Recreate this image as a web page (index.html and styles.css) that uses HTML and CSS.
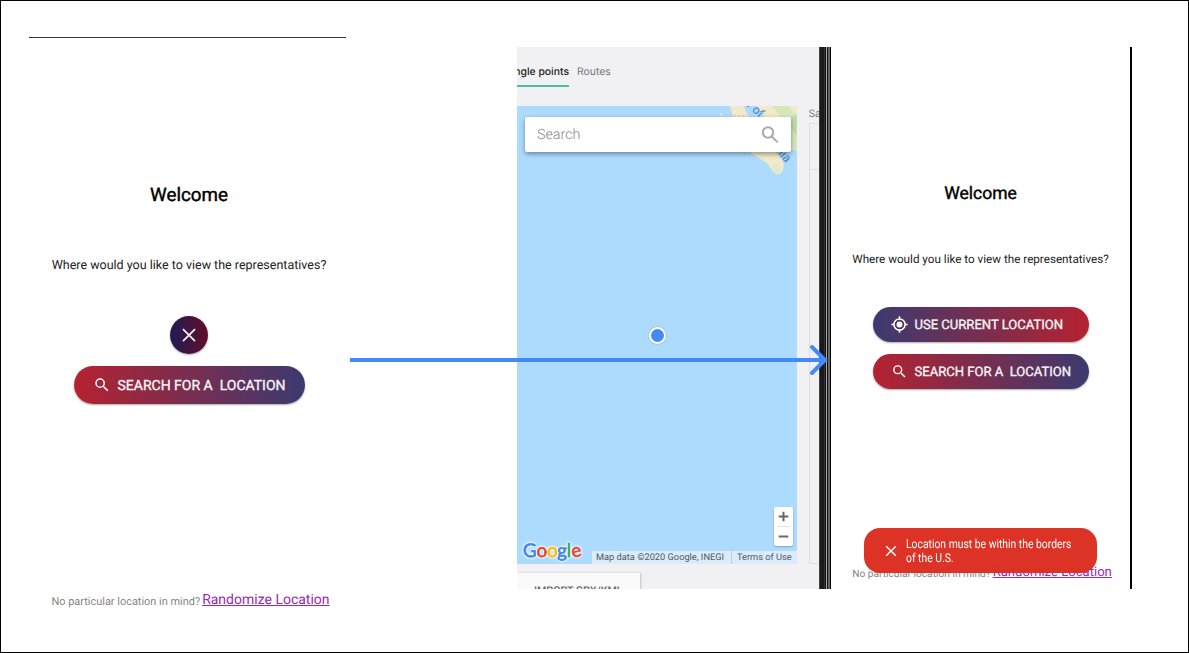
FILE: index.html
```html
<!DOCTYPE html>
<html lang="en">
<head>
<meta charset="utf-8">
<title>Welcome flow</title>
<link rel="stylesheet" href="styles.css">
</head>
<body>
<main class="board">
  <section class="screen start">
    <h1 class="title">Welcome</h1>
    <p class="question">Where would you like to view the representatives?</p>
    <button class="close"><svg width="38" height="38" viewBox="0 0 38 38"><path d="M13 13.2 25 25.2M25 13.2 13 25.2" stroke="#eee" stroke-width="1.8" fill="none"/></svg></button>
    <button class="pill pill-search">
      <svg class="pill-icon" viewBox="0 0 24 24"><path fill="#fff" d="M15.5 14h-.79l-.28-.27A6.47 6.47 0 0 0 16 9.5 6.5 6.5 0 1 0 9.5 16c1.61 0 3.09-.59 4.23-1.57l.27.28v.79l5 4.99L20.49 19zm-6 0a4.5 4.5 0 1 1 0-9 4.5 4.5 0 0 1 0 9z"/></svg>
      <span class="pill-label">SEARCH FOR A&nbsp; LOCATION</span>
    </button>
    <p class="footer"><span class="hint">No particular location in mind?</span> <a class="random">Randomize Location</a></p>
  </section>

  <section class="maps">
    <nav class="tabs"><span class="tab tab-active"><span class="tab-text">Single points</span></span><span class="tab">Routes</span></nav>
    <div class="content">
      <div class="map">
        <svg class="land" width="84" height="76" viewBox="0 0 84 76">
          <path fill="#f1e9c9" d="M17 0H31Q34 10 43 21L50 34Q57 42 64 47L69 54Q73 61 68 67Q63 71 59 64L54 57L38 47L24 27Q20 12 17 0Z"/>
          <path fill="#f1e9c9" d="M44 0H84V45Q74 43 69 34L60 24L51 10Z"/>
          <path fill="#d4e8ba" d="M59 0H76L84 12V45L74 40L78 25L67 10Z"/>
          <path fill="#bfdcaa" d="M76 12L84 8V30L78 22Z"/>
          <path fill="#dbebcb" d="M59 61Q64 54 68 61Q67 69 62 67Z"/>
          <path stroke="#d5c7a5" stroke-dasharray="2 2" d="M21 10H34"/>
          <circle cx="8.5" cy="8.5" r="1" fill="#eef2d8"/>
          <text class="sea" transform="translate(20 -12) rotate(42)">Gulf of</text>
          <text class="sea" text-anchor="end" transform="translate(73 57) rotate(48)">California</text>
        </svg>
        <div class="search"><span>Search</span><svg width="18" height="18" viewBox="0 0 18 18"><path fill="none" stroke="#aaa" stroke-width="2" d="M12.2 6.5a5.2 5.2 0 1 1-10.4 0 5.2 5.2 0 0 1 10.4 0zM10.5 10.2l6.2 6.2"/></svg></div>
        <span class="here"></span>
        <div class="zoomer"><span class="zoom-in"><svg width="19" height="19"><path d="M4.7 9.5h9.6M9.5 4.7v9.6" stroke="#666" stroke-width="2"/></svg></span><span class="zoom-out"><svg width="19" height="19"><path d="M4.7 9.5h9.6" stroke="#666" stroke-width="2"/></svg></span></div>
        <div class="credits">
          <span class="google"><b class="g-blue">G</b><b class="g-red">o</b><b class="g-yellow">o</b><b class="g-blue">g</b><b class="g-green">l</b><b class="g-red g-tilt">e</b></span>
          <span class="credit credit-data">Map data ©2020 Google, INEGI</span><span class="credit credit-terms">Terms of Use</span>
        </div>
      </div>
      <aside class="saved"><div class="saved-title">Saved</div><div class="saved-box"></div></aside>
    </div>
    <div class="import"><span>IMPORT GPX/KML</span></div>
    <div class="bezel"></div>
  </section>

  <section class="screen result">
    <h1 class="title">Welcome</h1>
    <p class="question">Where would you like to view the representatives?</p>
    <button class="pill pill-current">
      <svg class="pill-icon" viewBox="0 0 24 24"><circle cx="12" cy="12" r="7.9" fill="none" stroke="#fff" stroke-width="2.2"/><circle cx="12" cy="12" r="4.2" fill="#fff"/><path stroke="#fff" stroke-width="2.2" d="M12 .5v4M12 19.5v4M.5 12h4M19.5 12h4"/></svg>
      <span class="pill-label">USE CURRENT LOCATION</span>
    </button>
    <button class="pill pill-search">
      <svg class="pill-icon" viewBox="0 0 24 24"><path fill="#fff" d="M15.5 14h-.79l-.28-.27A6.47 6.47 0 0 0 16 9.5 6.5 6.5 0 1 0 9.5 16c1.61 0 3.09-.59 4.23-1.57l.27.28v.79l5 4.99L20.49 19zm-6 0a4.5 4.5 0 1 1 0-9 4.5 4.5 0 0 1 0 9z"/></svg>
      <span class="pill-label">SEARCH FOR A&nbsp; LOCATION</span>
    </button>
    <p class="footer"><span class="hint">No particular location in mind?</span> <a class="random">Randomize Location</a></p>
    <div class="toast"><svg width="12" height="12"><path d="M1.2 1.2 10.8 10.8M10.8 1.2 1.2 10.8" stroke="#fff" stroke-width="1.4"/></svg><p class="toast-text">Location must be within the borders<br>of the U.S.</p></div>
  </section>

  <svg class="arrow" width="480" height="34" viewBox="0 0 480 34"><path fill="none" stroke="#4489f8" stroke-width="4" d="M0 17H474"/><path fill="none" stroke="#4489f8" stroke-width="4" stroke-linecap="round" d="M462 4 475 17 462 30"/></svg>
</main>
</body>
</html>
```

FILE: styles.css
```css
* { box-sizing: border-box; }
body { margin: 0; font-family: Roboto, sans-serif; background: #fff; text-rendering: geometricPrecision; }
h1, p { margin: 0; }
button { border: 0; padding: 0; font-family: inherit; color: #f6f3f6; text-rendering: inherit; }
svg { display: block; flex: none; }

.board { position: relative; display: flex; align-items: flex-start; width: 1189px; height: 653px; border: 1px solid #000; overflow: hidden; }

.screen { display: flex; flex-direction: column; align-items: center; white-space: nowrap; }
.title { font-weight: 400; color: #000; -webkit-text-stroke: .4px #000; }
.question { color: #222; }
.footer { display: flex; align-items: baseline; }
.hint { color: #858585; }
.random { color: #9c27b0; text-decoration: underline; text-decoration-thickness: 1px; }

.start { width: 320px; height: 580px; margin: 36px 0 0 28px; }
.start::before { content: ""; align-self: flex-start; width: 317px; height: 1px; background: #333; }
.start .title { margin-top: 145px; font-size: 18.8px; line-height: 24px; }
.start .question { margin-top: 49px; font-size: 12.5px; line-height: 20px; }
.close { width: 38px; height: 38px; margin-top: 40px; border-radius: 50%; background: linear-gradient(90deg, #201b54, #620d2b); box-shadow: 0 1px 2px #0005; }
.pill { display: flex; align-items: center; border-radius: 19px; box-shadow: 0 1px 2px #0005; }
.pill-search { background: linear-gradient(90deg, #b52230, #3b3a70); }
.pill-current { background: linear-gradient(90deg, #3b3a70, #b52230); }
.pill-label { padding-top: 2px; -webkit-text-stroke: .35px #f6f3f6; }
.start .pill { width: 231px; height: 38px; margin-top: 12px; padding-left: 19px; }
.start .pill-icon { width: 18px; height: 18px; margin-right: 7px; }
.start .pill-label { font-size: 14px; }
.start .footer { margin: 186px 0 0 3px; gap: 2px; }
.start .hint { font-size: 10.95px; position: relative; top: 1px; }
.start .random { font-size: 14px; line-height: 20px; }

.maps { position: relative; width: 314px; height: 542px; margin: 46px 0 0 168px; overflow: hidden; background: #f1f1f4; }
.tabs { display: flex; gap: 8px; height: 59px; padding-top: 17px; font: 10.4px/16px Inter, sans-serif; color: #777; }
.tab { height: 23px; }
.tab-active { display: flex; justify-content: flex-end; width: 52px; overflow: hidden; white-space: nowrap; color: #222; border-bottom: 2px solid #4dbaa3; font-weight: 500; }
.content { display: flex; height: 458px; }
.map { position: relative; display: flex; flex-direction: column; width: 280px; height: 458px; background: #addbfe; }
.land { position: absolute; right: 0; top: 0; overflow: hidden; }
.sea { font: 12px Roboto, sans-serif; fill: #4b7dbb; }
.search { position: relative; display: flex; justify-content: space-between; align-items: center; width: 266px; height: 35px; margin: 11px 0 0 8px; padding: 0 12px; border-radius: 2px; background: #fff; box-shadow: 0 2px 5px #0006; color: #888; font-size: 14.3px; font-weight: 300; }
.here { position: absolute; left: 132px; top: 220.5px; width: 17px; height: 17px; border: 2px solid #fff; border-radius: 50%; background: #4489f8; box-shadow: 0 0 2px #0004; }
.zoomer { align-self: flex-end; width: 19px; height: 39px; margin: auto 4px -4px 0; border-radius: 2px; background: #fff; box-shadow: 0 1px 2px #0004; }
.zoom-in, .zoom-out { display: block; }
.zoom-in::after { content: ""; display: block; height: 1px; margin: 0 3px; background: #e4e4e4; }
.credits { display: flex; align-items: flex-end; height: 22px; white-space: nowrap; font-size: 9.25px; color: #4d5966; }
.google { width: 75px; height: 24px; padding-left: 6px; font: 18.8px/21px Lato, sans-serif; letter-spacing: -.2px; filter: drop-shadow(0 0 1px #fff) drop-shadow(0 0 1px #fff); }
.google b { font-weight: 400; -webkit-text-stroke: .7px currentColor; }
.google .g-tilt { display: inline-block; transform: rotate(-12deg); }
.g-blue { color: #4285f4; }
.g-red { color: #ea4335; }
.g-yellow { color: #fbbc05; }
.g-green { color: #34a853; }
.credit { height: 13px; line-height: 14px; background: #dcebfa; }
.credit-data { width: 139px; padding-left: 4px; }
.credit-terms { width: 66px; padding-left: 5px; border-left: 1px solid #b9cede; }
.maps .zoomer { transform: translateY(-1px); margin-bottom: -5px; }
.saved { width: 22px; margin-left: 11.5px; overflow: hidden; font: 10.3px/17px Inter, sans-serif; color: #777; }
.saved-box { height: 441px; border: 1px solid #dedee0; border-right: 0; background: linear-gradient(#dedee0, #dedee0) 0 45px / 100% 1px no-repeat; }
.import { width: 123px; height: 30px; margin-top: 9px; padding: 10px 0 0 17px; background: #fafafa; box-shadow: 1px 0 2px #0003; font-size: 10.7px; line-height: 16px; font-weight: 500; color: #666; white-space: nowrap; }
.bezel { position: absolute; right: 0; top: 0; width: 12px; height: 542px; background: linear-gradient(90deg, #444 0 1px, #1b1b1d 1px 5px, #333 5px 6px, #111 6px 7px, #aaa 7px 8px, #111 8px 9px, #666 9px 11px, #050505 11px); }

.result { position: relative; width: 301px; height: 542px; margin-top: 46px; border-right: 2px solid #000; }
.result .title { margin-top: 135px; font-size: 17.5px; line-height: 24px; }
.result .question { margin-top: 43px; font-size: 11.68px; line-height: 20px; }
.result .pill { width: 216px; height: 35px; margin-top: 12px; padding-left: 18px; }
.result .pill-current { margin-top: 38px; }
.result .pill-icon { width: 17px; height: 17px; margin-right: 7px; }
.result .pill-label { font-size: 13.05px; }
.result .footer { margin: 174px 0 0 3px; gap: 2px; }
.result .hint { font-size: 10.2px; position: relative; top: 1px; }
.result .random { font-size: 13.1px; line-height: 20px; }
.toast { position: absolute; left: 33px; top: 481px; display: flex; align-items: center; gap: 9px; width: 233px; height: 45px; padding-left: 21px; border-radius: 16px; background: #db2f22fa; color: #fff; }
.toast-text { font-size: 12.2px; line-height: 14px; transform: scaleX(.85); transform-origin: left; }
.arrow { position: absolute; left: 349px; top: 341.5px; }
```
